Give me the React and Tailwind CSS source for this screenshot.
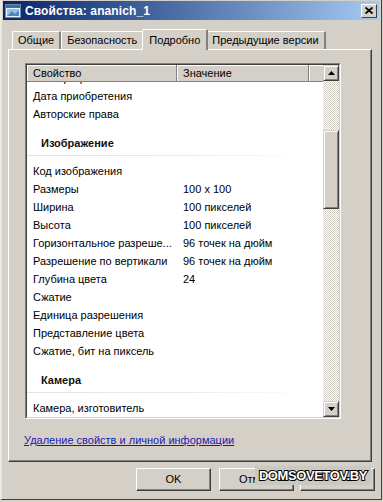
import React from 'react';

const rows1 = [
  ['Код изображения', ''],
  ['Размеры', '100 x 100'],
  ['Ширина', '100 пикселей'],
  ['Высота', '100 пикселей'],
  ['Горизонтальное разреше...', '96 точек на дюйм'],
  ['Разрешение по вертикали', '96 точек на дюйм'],
  ['Глубина цвета', '24'],
  ['Сжатие', ''],
  ['Единица разрешения', ''],
  ['Представление цвета', ''],
  ['Сжатие, бит на пиксель', ''],
];

const Row = ({ name, value }) => (
  <div className="flex h-[18px] items-center">
    <div className="w-[150px] pl-[6px] whitespace-nowrap overflow-hidden">{name}</div>
    <div className="pl-[6px] whitespace-nowrap">{value}</div>
  </div>
);

const Group = ({ title }) => (
  <div className="h-[39px] flex flex-col">
    <div className="h-[11px]" />
    <div className="h-[18px] flex items-center pl-[14px] font-bold text-[#111]">{title}</div>
    <div className="mt-[3px] h-px w-[285px] bg-gradient-to-r from-[#e4e4e4] via-[#e8e8e8] to-white" />
  </div>
);

const Tab = ({ label, active }) => (
  <div
    className={
      active
        ? 'relative z-10 h-[21px] -mb-px px-[6px] flex items-start pt-[2px] bg-[#d4d0c8] border-t border-l border-white border-r-2 border-r-[#808080] rounded-t-[2px] -mx-[2px]'
        : 'h-[18px] mt-[3px] px-[5px] flex items-center bg-[#d4d0c8] border-t border-l border-white border-r-2 border-r-[#808080] rounded-t-[2px]'
    }
  >
    {label}
  </div>
);

const Button = ({ label, className = '' }) => (
  <div
    className={
      'w-[75px] h-[23px] flex items-center justify-center bg-[#d4d0c8] border border-t-white border-l-white border-r-[#404040] border-b-[#404040] shadow-[inset_-1px_-1px_0_#808080] ' +
      className
    }
  >
    {label}
  </div>
);

export default function App() {
  return (
    <div className="relative w-[383px] h-[502px] overflow-hidden bg-[#d4d0c8] text-[11px] text-black font-['Liberation_Sans',Arial,sans-serif]">
      <div className="h-[500px] w-[382px] border-l-2 border-l-[#ece9e2] border-r border-r-[#404040] border-b border-b-[#404040] pt-px">
        {/* title bar */}
        <div className="ml-px w-[376px] h-[19px] flex items-center bg-gradient-to-r from-[#0a246a] to-[#a6caf0]">
          <svg width="16" height="14" viewBox="0 0 16 14" className="ml-[2px]">
            <rect x="0.5" y="0.5" width="15" height="13" fill="#e8f0f8" stroke="#6a8aa8" />
            <rect x="1" y="1" width="14" height="3" fill="#3a6ea8" />
            <rect x="2" y="5" width="12" height="7" fill="#9cc0e0" />
            <path d="M2 12 L7 7 L10 10 L14 6 L14 12 Z" fill="#4a86c0" />
          </svg>
          <span className="ml-[4px] text-white font-bold text-[12px] tracking-[0.1px]">Свойства: ananich_1</span>
          <div className="ml-auto mr-[2px] w-[16px] h-[14px] bg-[#d4d0c8] border border-t-white border-l-white border-r-[#404040] border-b-[#404040] flex items-center justify-center">
            <svg width="8" height="7" viewBox="0 0 8 7">
              <path d="M0.5 0.5 L7.5 6.5 M7.5 0.5 L0.5 6.5" stroke="#000" strokeWidth="1.8" />
            </svg>
          </div>
        </div>

        {/* tabs */}
        <div className="mt-[8px] ml-[10px] flex items-end h-[21px]">
          <Tab label="Общие" />
          <Tab label="Безопасность" />
          <Tab label="Подробно" active />
          <Tab label="Предыдущие версии" />
        </div>

        {/* panel */}
        <div className="ml-[6px] w-[364px] h-[413px] border-t border-l border-white border-r border-b border-r-[#404040] border-b-[#404040] shadow-[inset_-1px_-1px_0_#808080] pt-[13px] pl-[16px]">
          <div className="w-[316px] h-[356px] border border-t-[#808080] border-l-[#808080] border-r-white border-b-white">
            <div className="h-full border border-t-[#404040] border-l-[#404040] border-r-[#d4d0c8] border-b-[#d4d0c8] bg-white flex">
              <div className="flex-1 flex flex-col overflow-hidden">
                {/* header */}
                <div className="h-[17px] flex shrink-0 bg-[#d4d0c8]">
                  <div className="w-[150px] pl-[6px] flex items-center border-r border-[#808080] border-b shadow-[inset_1px_1px_0_#fff]">Свойство</div>
                  <div className="w-[132px] pl-[6px] flex items-center border-r border-[#808080] border-b shadow-[inset_1px_1px_0_#fff]">Значение</div>
                  <div className="flex-1 border-b border-[#808080] shadow-[inset_1px_1px_0_#fff]" />
                </div>
                <div className="flex-1 overflow-hidden">
                  <div className="-mt-[13px]">
                    <Row name="Имя программы" value="" />
                    <Row name="Дата приобретения" value="" />
                    <Row name="Авторские права" value="" />
                    <Group title="Изображение" />
                    {rows1.map(([n, v]) => (
                      <Row key={n} name={n} value={v} />
                    ))}
                    <Group title="Камера" />
                    <Row name="Камера, изготовитель" value="" />
                  </div>
                </div>
              </div>
              {/* scrollbar */}
              <div className="w-[16px] flex flex-col bg-[repeating-conic-gradient(#ffffff_0%_25%,#d4d0c8_0%_50%)] bg-[length:2px_2px]">
                <div className="h-[16px] bg-[#d4d0c8] border border-t-[#d4d0c8] border-l-[#d4d0c8] border-r-[#404040] border-b-[#404040] shadow-[inset_1px_1px_0_#fff,inset_-1px_-1px_0_#808080] flex items-center justify-center">
                  <svg width="7" height="4" viewBox="0 0 7 4"><path d="M3.5 0 L7 4 L0 4 Z" fill="#000" /></svg>
                </div>
                <div className="mt-[49px] h-[79px] bg-[#d4d0c8] border border-t-[#d4d0c8] border-l-[#d4d0c8] border-r-[#404040] border-b-[#404040] shadow-[inset_1px_1px_0_#fff,inset_-1px_-1px_0_#808080]" />
                <div className="mt-auto h-[16px] bg-[#d4d0c8] border border-t-[#d4d0c8] border-l-[#d4d0c8] border-r-[#404040] border-b-[#404040] shadow-[inset_1px_1px_0_#fff,inset_-1px_-1px_0_#808080] flex items-center justify-center">
                  <svg width="7" height="4" viewBox="0 0 7 4"><path d="M0 0 L7 0 L3.5 4 Z" fill="#000" /></svg>
                </div>
              </div>
            </div>
          </div>
          <div className="mt-[13px] ml-[-1px] text-[#1a1ab0] underline">Удаление свойств и личной информации</div>
        </div>

        {/* buttons */}
        <div className="mt-[6px] flex gap-[8px] pl-[134px]">
          <Button label="OK" />
          <Button label="Отм" className="justify-start pl-[19px]" />
          <Button label="" className="w-[74px] -ml-[2px]" />
        </div>
      </div>

      {/* watermark */}
      <div className="absolute left-[255px] top-[466px] w-[116px] h-[19px] bg-[#cbc8c1] flex items-center justify-center">
        <span className="text-white font-bold text-[13px] tracking-[-0.4px] [-webkit-text-stroke:2px_#000] [paint-order:stroke_fill] font-['Liberation_Sans',sans-serif]">
          DOMSOVETOV.BY
        </span>
      </div>
    </div>
  );
}
